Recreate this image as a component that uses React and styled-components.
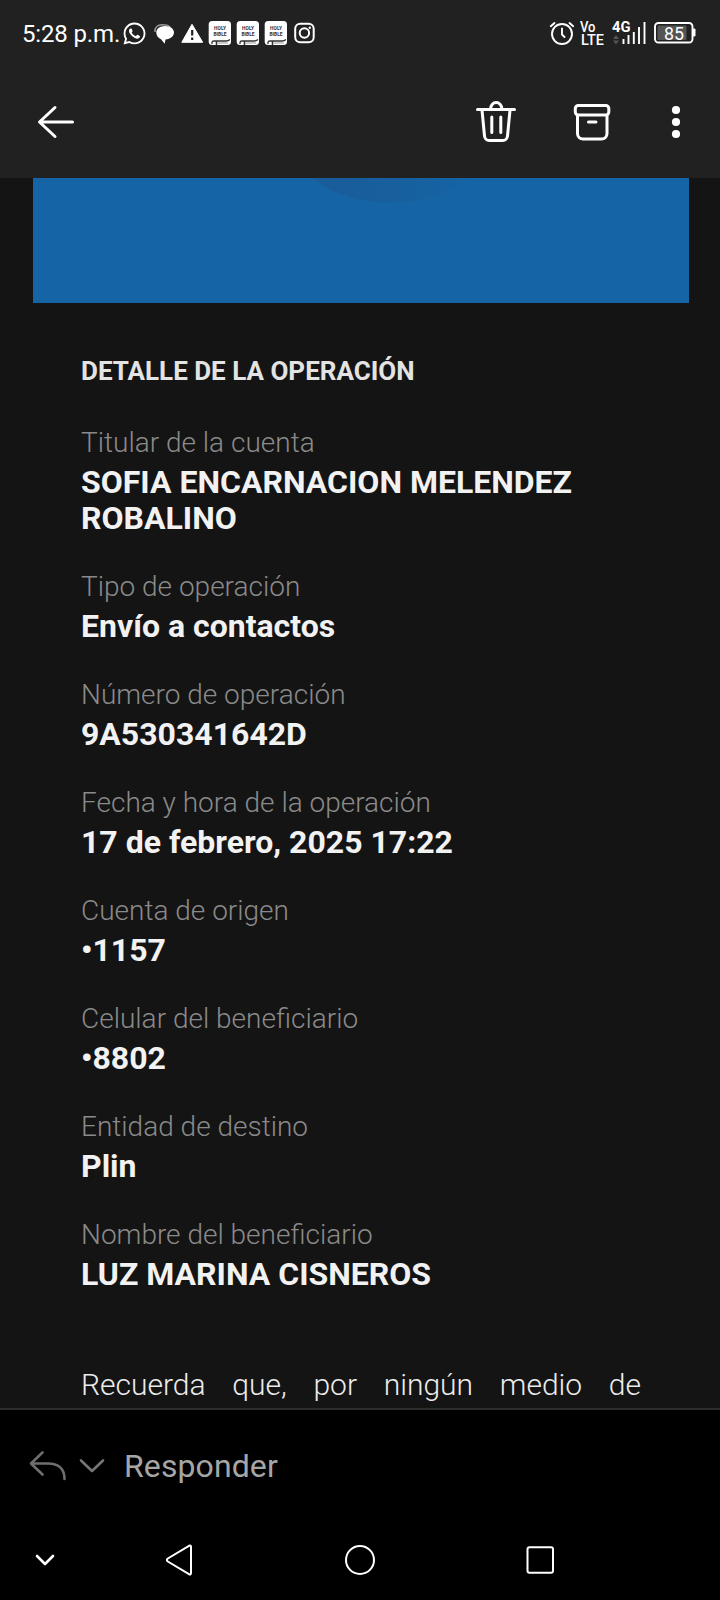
import styled, { createGlobalStyle } from "styled-components";
import { FaWhatsapp } from "react-icons/fa";

const GlobalStyle = createGlobalStyle`
  * {
    box-sizing: border-box;
  }

  body {
    margin: 0;
    background: #000;
    font-family: Roboto, "Noto Sans", sans-serif;
  }

  svg {
    display: block;
    flex-shrink: 0;
  }
`;

const Screen = styled.div`
  width: 720px;
  height: 1600px;
  display: flex;
  flex-direction: column;
  overflow: hidden;
  background: #000;
`;

const StatusBar = styled.header`
  height: 66px;
  flex-shrink: 0;
  display: flex;
  justify-content: space-between;
  align-items: center;
  padding: 0 24px 0 22px;
  background: #212121;
  color: #fff;
`;

const StatusGroup = styled.div`
  display: flex;
  align-items: center;
  gap: ${({ $gap }) => $gap}px;
`;

const Time = styled.span`
  width: 95px;
  padding-top: 1px;
  font-size: 24px;
  line-height: 28px;
  letter-spacing: -0.15px;
  white-space: nowrap;
`;

const Toolbar = styled.nav`
  height: 112px;
  flex-shrink: 0;
  display: flex;
  align-items: center;
  padding: 0 36px;
  background: #212121;
`;

const ToolbarActions = styled.div`
  display: flex;
  align-items: center;
  margin-left: auto;
`;

const IconButton = styled.button`
  display: flex;
  padding: 0;
  margin-right: ${({ $right }) => $right || 0}px;
  border: none;
  background: none;
`;

const Mail = styled.main`
  height: 1230px;
  flex-shrink: 0;
  overflow: hidden;
  padding: 0 31px 0 33px;
  background: #141414;
`;

const Banner = styled.div`
  height: 125px;
  overflow: hidden;
  padding-left: 240px;
  background: #1564a5;
`;

const Details = styled.section`
  width: 560px;
  margin-left: 48px;
  padding-top: 52px;
`;

const Heading = styled.h2`
  margin: 0 0 38px;
  font-size: 26px;
  line-height: 32px;
  font-weight: 700;
  color: #e3e3e3;
`;

const FieldList = styled.dl`
  display: flex;
  flex-direction: column;
  gap: 33px;
  margin: 0;
`;

const Field = styled.div``;

const Label = styled.dt`
  margin-bottom: 3px;
  font-size: 28px;
  line-height: 36px;
  font-weight: 300;
  color: #8a8a8a;
`;

const Value = styled.dd`
  margin: 0;
  font-size: 32px;
  line-height: 36px;
  font-weight: 700;
  color: #f2f2f2;
`;

const Notice = styled.p`
  margin: 74px 0 0;
  height: 38px;
  overflow: hidden;
  font-size: 30px;
  line-height: 38px;
  font-weight: 300;
  text-align: justify;
  text-align-last: justify;
  color: #ececec;
`;

const ReplyBar = styled.div`
  height: 112px;
  flex-shrink: 0;
  display: flex;
  align-items: center;
  padding: 2px 0 0 28px;
  border-top: 2px solid #2c2c2c;
`;

const ReplyText = styled.span`
  margin-left: 19px;
  font-size: 32px;
  line-height: 38px;
  letter-spacing: 0.1px;
  color: #a6a6a6;
`;

const SystemNav = styled.footer`
  height: 80px;
  display: flex;
  align-items: center;
  padding-left: 33px;
`;

const fields = [
  { label: "Titular de la cuenta", value: "SOFIA ENCARNACION MELENDEZ ROBALINO" },
  { label: "Tipo de operación", value: "Envío a contactos" },
  { label: "Número de operación", value: "9A530341642D" },
  { label: "Fecha y hora de la operación", value: "17 de febrero, 2025 17:22" },
  { label: "Cuenta de origen", value: "•1157" },
  { label: "Celular del beneficiario", value: "•8802" },
  { label: "Entidad de destino", value: "Plin" },
  { label: "Nombre del beneficiario", value: "LUZ MARINA CISNEROS" },
];

const ChatIcon = () => (
  <svg width="23" height="26" viewBox="0 0 23 26">
    <path
      d="M3 12C2.500 7 6 4.700 10 4.700c5 0 7 .5 8 2.500"
      fill="none"
      stroke="#999"
      strokeWidth="1.500"
    />
    <path
      d="M13 6c5 0 9 2.800 9 6.500 0 3.700-3.500 6.500-8.500 7.100l-.8 4.200-3.700-4.500C6 17.800 4.300 15.500 4.300 12.500 4.300 8.800 8 6 13 6z"
      fill="#fff"
    />
  </svg>
);

const WarningIcon = () => (
  <svg width="23" height="26" viewBox="0 0 23 26">
    <path d="M12 4.300 22.700 22.300H1.800z" fill="#fff" stroke="#fff" strokeLinejoin="round" />
    <path d="M12.200 10v5.500M12.200 17.500v2.500" stroke="#212121" strokeWidth="2.200" />
  </svg>
);

const BibleIcon = () => (
  <svg width="23" height="26" viewBox="0 0 23 26">
    <rect x="0.700" y="1" width="22.300" height="24" rx="3.500" fill="#fff" />
    <path d="M4 24v-1.500c0-1 1-1.500 2-1.500h12q2.500 0 4-1.500" fill="none" stroke="#333" strokeWidth="1.300" />
    <path d="M10 23h10" stroke="#999" strokeWidth="1" />
    <path d="M8.500 21v4" stroke="#333" strokeWidth="1.600" />
    <text x="12" y="10" fontSize="4.900" fontWeight="700" textAnchor="middle" fill="#333">
      HOLY
    </text>
    <text x="12" y="15.800" fontSize="4.900" fontWeight="700" textAnchor="middle" fill="#333">
      BIBLE
    </text>
  </svg>
);

const InstagramIcon = () => (
  <svg width="23" height="26" viewBox="0 0 23 26" fill="none" stroke="#fff" strokeWidth="2">
    <rect x="3.200" y="3.800" width="18.500" height="18.500" rx="5" />
    <circle cx="12.400" cy="13" r="4.700" />
    <circle cx="17.800" cy="7.800" r="1.200" fill="#fff" stroke="none" />
  </svg>
);

const AlarmIcon = () => (
  <svg width="26" height="26" viewBox="0 0 26 26" fill="none" stroke="#fff" strokeWidth="1.900" strokeLinecap="round">
    <circle cx="14" cy="14" r="10" />
    <path d="M14 8.500v6l2.500 2.500M2.800 6.200 6.500 3M21.500 3l3.700 3.200" />
  </svg>
);

const VolteIcon = () => (
  <svg width="25" height="28" viewBox="0 0 25 28" fill="#fff" fontSize="14.800" fontWeight="500">
    <text x="0" y="13.300" textLength="15.500" lengthAdjust="spacingAndGlyphs">Vo</text>
    <text x="1" y="25.700" textLength="23" lengthAdjust="spacingAndGlyphs">LTE</text>
  </svg>
);

const SignalIcon = () => (
  <svg width="36" height="28" viewBox="0 0 36 28">
    <text x="1" y="13" fontSize="15" fontWeight="700" fill="#fff" textLength="18.500" lengthAdjust="spacingAndGlyphs">
      4G
    </text>
    <path d="M2 20l3-4 3 4zM2 21.500l3 4 3-4z" fill="#555" />
    <path
      d="M12.500 25v-5M17.500 25v-9M22.800 25V13M28 25V8M33.500 25V3"
      stroke="#fff"
      strokeWidth="1.900"
    />
  </svg>
);

const BatteryIcon = () => (
  <svg width="43" height="26" viewBox="0 0 43 26">
    <rect x="2" y="3" width="37.500" height="19.500" rx="3.500" fill="none" stroke="#fff" strokeWidth="1.900" />
    <rect x="4.500" y="5.500" width="29" height="14.500" rx="1" fill="#555" />
    <path d="M40.500 9h1.500v7h-1.500z" fill="#fff" stroke="#fff" strokeLinejoin="round" />
    <text x="11" y="19.500" fontSize="18" fill="#fff" textLength="20" lengthAdjust="spacingAndGlyphs">
      85
    </text>
  </svg>
);

const BackIcon = () => (
  <svg width="40" height="40" viewBox="0 0 40 40" fill="none" stroke="#fff" strokeWidth="3" strokeLinecap="round" strokeLinejoin="round">
    <path d="M36.500 20H4M19 5.500 3.500 20 19 34.500" />
  </svg>
);

const TrashIcon = () => (
  <svg width="44" height="44" viewBox="0 0 44 44" fill="none" stroke="#fff" strokeWidth="3" strokeLinecap="round" strokeLinejoin="round">
    <path d="M3.500 9.500h37M16.500 9a5.700 6.500 0 0 1 11.400 0M8 10l2.500 26a4.800 4.800 0 0 0 4.800 4.500h13.400a4.800 4.800 0 0 0 4.800-4.500l2.500-26M17.800 17v15.500M26.800 17v15.500" />
  </svg>
);

const ArchiveIcon = () => (
  <svg width="40" height="40" viewBox="0 0 40 40" fill="none" stroke="#fff" strokeWidth="3" strokeLinecap="round" strokeLinejoin="round">
    <rect x="3.300" y="3.500" width="33.500" height="9.500" rx="3" />
    <path d="M5.500 13v18.500a5.500 5.500 0 0 0 5.500 5.500h18.500a5.500 5.500 0 0 0 5.500-5.500V13M16.500 20h7.500" />
  </svg>
);

const MoreIcon = () => (
  <svg width="16" height="40" viewBox="0 0 16 40" fill="#fff">
    {[8, 20, 32].map((y) => (
      <circle key={y} cx="8" cy={y} r="4.100" />
    ))}
  </svg>
);

const BannerShape = () => (
  <svg width="240" height="40" viewBox="0 0 240 40">
    <defs>
      <linearGradient id="shade" x1="0" x2="1">
        <stop offset="0" stopColor="#195c99" />
        <stop offset="0.5" stopColor="#185f9d" />
        <stop offset="0.9" stopColor="#1564a5" />
      </linearGradient>
    </defs>
    <ellipse cx="118" cy="-48" rx="105" ry="73" fill="url(#shade)" />
  </svg>
);

const ReplyIcon = () => (
  <svg width="40" height="34" viewBox="0 0 40 34" fill="none" stroke="#6e6e6e" strokeWidth="2.600" strokeLinecap="round" strokeLinejoin="round">
    <path d="M14.500 3.500 3 14.500l11.500 11M3 14.500h17c10 0 16.500 5 16.500 15.500" />
  </svg>
);

const ReplyChevron = () => (
  <svg width="26" height="18" viewBox="0 0 26 18" fill="none" stroke="#757575" strokeWidth="2.600" strokeLinecap="round" strokeLinejoin="round">
    <path d="M2 3.500 13 14 24 3.500" />
  </svg>
);

const HideIcon = () => (
  <svg width="24" height="16" viewBox="0 0 24 16" fill="none" stroke="#fff" strokeWidth="2.600" strokeLinecap="round" strokeLinejoin="round">
    <path d="M4 4l8 8 8-8" />
  </svg>
);

const NavBackIcon = () => (
  <svg width="30" height="34" viewBox="0 0 30 34" fill="none" stroke="#fff" strokeWidth="2" strokeLinejoin="round">
    <path d="M25 2.800 3.800 15.500q-1.800 1.500 0 3L25 31.200q2 .8 2-1.200V4q0-2-2-1.200z" />
  </svg>
);

const HomeIcon = () => (
  <svg width="32" height="32" viewBox="0 0 32 32" fill="none" stroke="#fff" strokeWidth="2">
    <circle cx="16" cy="16" r="14" />
  </svg>
);

const RecentsIcon = () => (
  <svg width="32" height="32" viewBox="0 0 32 32" fill="none" stroke="#fff" strokeWidth="2">
    <rect x="3.500" y="3.300" width="25.500" height="25.500" rx="2" />
  </svg>
);

export default function App() {
  return (
    <>
      <GlobalStyle />
      <Screen>
        <StatusBar>
          <StatusGroup $gap={5}>
            <Time>5:28 p.m.</Time>
            <FaWhatsapp size={25} />
            <ChatIcon />
            <WarningIcon />
            <BibleIcon />
            <BibleIcon />
            <BibleIcon />
            <InstagramIcon />
          </StatusGroup>
          <StatusGroup $gap={6}>
            <AlarmIcon />
            <VolteIcon />
            <SignalIcon />
            <BatteryIcon />
          </StatusGroup>
        </StatusBar>
        <Toolbar>
          <IconButton aria-label="Atrás">
            <BackIcon />
          </IconButton>
          <ToolbarActions>
            <IconButton $right={54} aria-label="Eliminar">
              <TrashIcon />
            </IconButton>
            <IconButton $right={56} aria-label="Archivar">
              <ArchiveIcon />
            </IconButton>
            <IconButton aria-label="Más opciones">
              <MoreIcon />
            </IconButton>
          </ToolbarActions>
        </Toolbar>
        <Mail>
          <Banner>
            <BannerShape />
          </Banner>
          <Details>
            <Heading>DETALLE DE LA OPERACIÓN</Heading>
            <FieldList>
              {fields.map(({ label, value }) => (
                <Field key={label}>
                  <Label>{label}</Label>
                  <Value>{value}</Value>
                </Field>
              ))}
            </FieldList>
            <Notice>Recuerda que, por ningún medio de</Notice>
          </Details>
        </Mail>
        <ReplyBar>
          <IconButton $right={11} aria-label="Responder">
            <ReplyIcon />
          </IconButton>
          <IconButton aria-label="Opciones de respuesta">
            <ReplyChevron />
          </IconButton>
          <ReplyText>Responder</ReplyText>
        </ReplyBar>
        <SystemNav>
          <IconButton $right={107} aria-label="Ocultar">
            <HideIcon />
          </IconButton>
          <IconButton $right={150} aria-label="Volver">
            <NavBackIcon />
          </IconButton>
          <IconButton $right={148} aria-label="Inicio">
            <HomeIcon />
          </IconButton>
          <IconButton aria-label="Recientes">
            <RecentsIcon />
          </IconButton>
        </SystemNav>
      </Screen>
    </>
  );
}
